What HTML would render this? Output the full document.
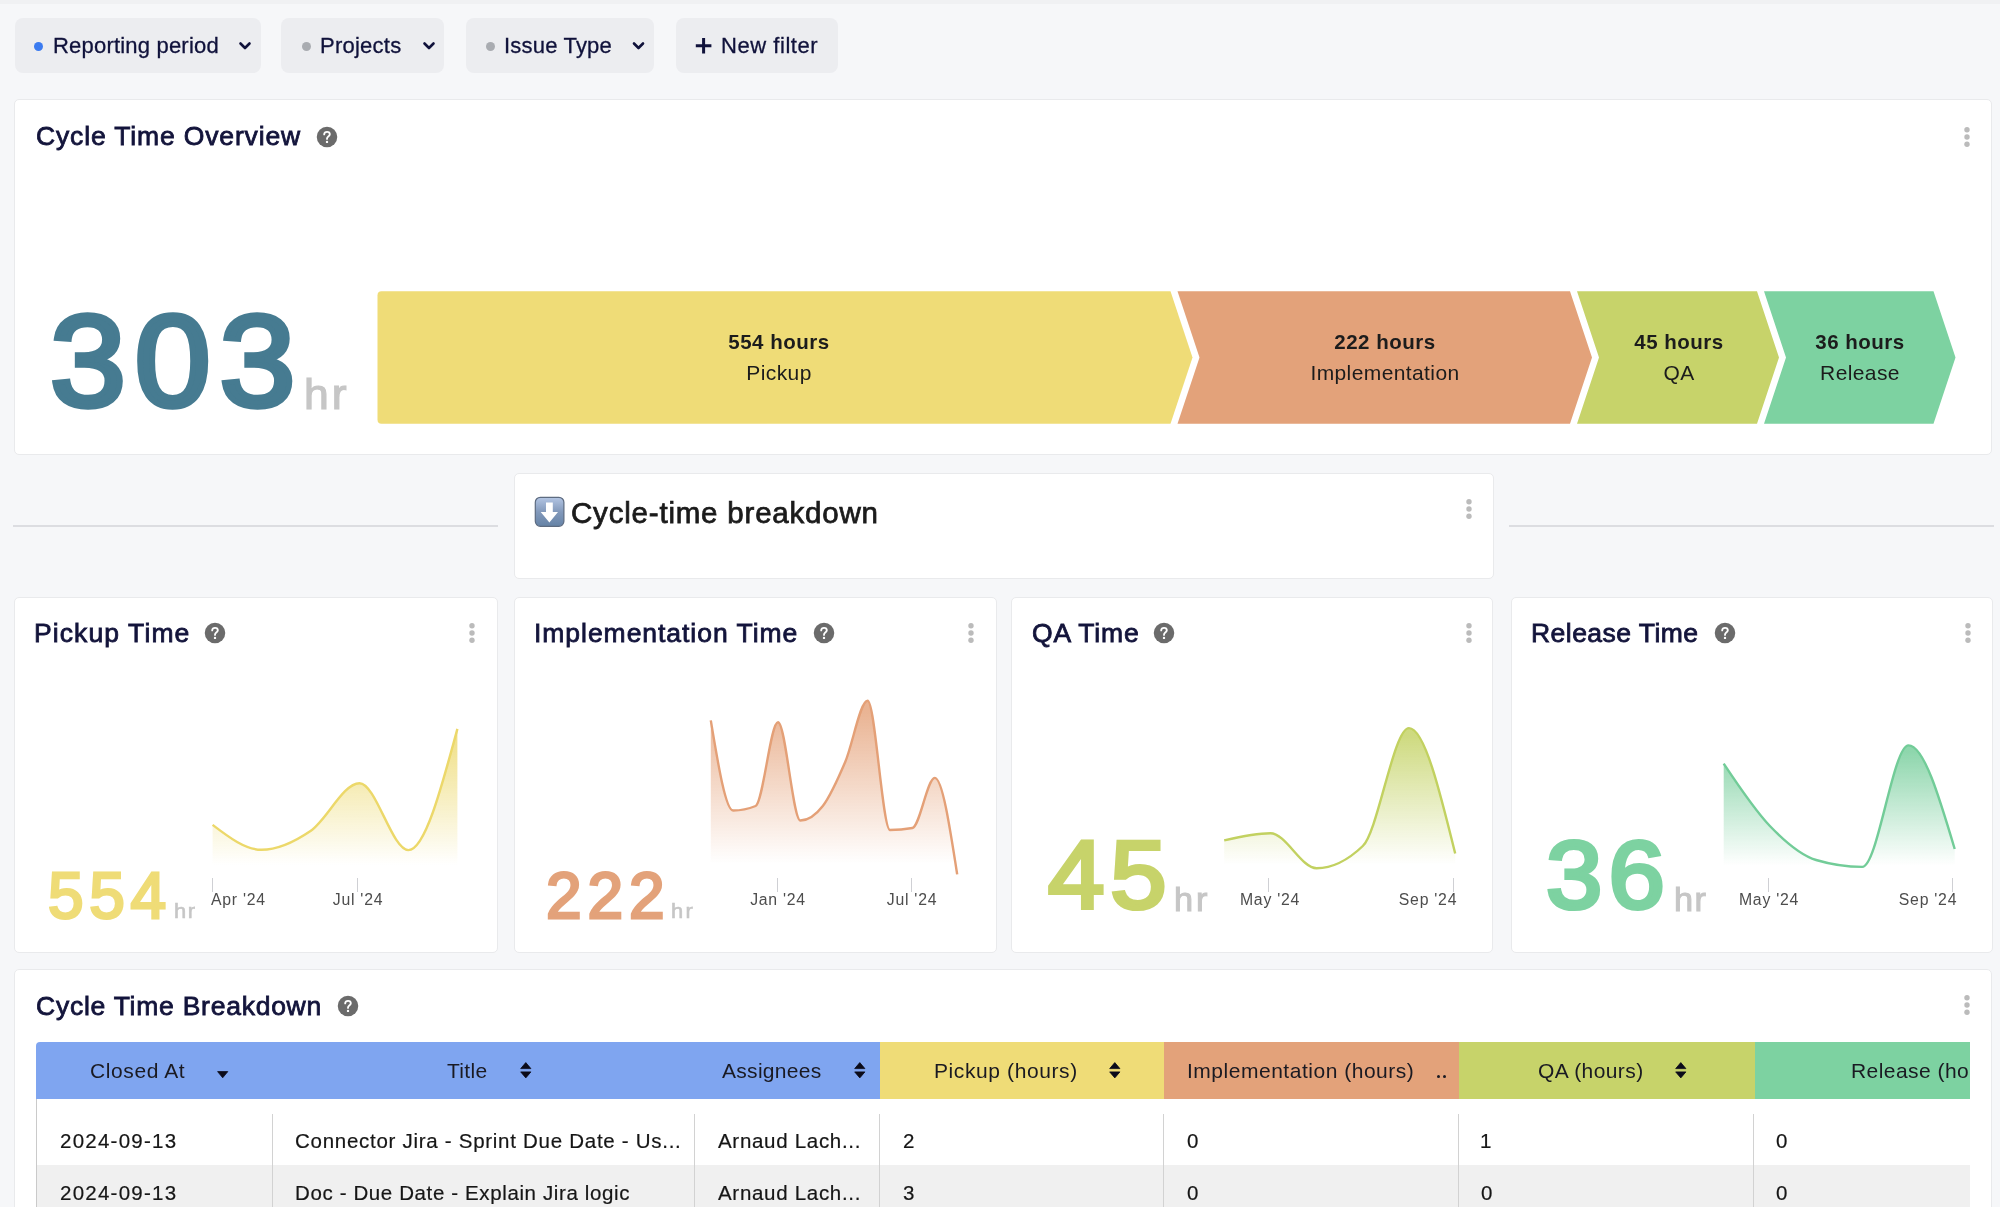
<!DOCTYPE html>
<html><head><meta charset="utf-8">
<style>
*{box-sizing:border-box;margin:0;padding:0}
html,body{width:2000px;height:1207px;overflow:hidden;background:#f6f7f9;font-family:"Liberation Sans",sans-serif}
.a{position:absolute}
.t{position:absolute;line-height:1;white-space:nowrap;will-change:transform}
.btn{position:absolute;background:#ecedf0;border-radius:8px;top:18px;height:55px}
.card{position:absolute;background:#fff;border:1px solid #e9eaec;border-radius:5px}
.med{-webkit-text-stroke:0.45px currentColor}
</style></head><body>
<div class="a" style="left:0;top:0;width:2000px;height:4px;background:#f0f1f3"></div>
<div class="btn" style="left:15px;width:246px"></div>
<div class="btn" style="left:281px;width:163px"></div>
<div class="btn" style="left:466px;width:188px"></div>
<div class="btn" style="left:676px;width:162px"></div>
<div class="a" style="left:34px;top:41.5px;width:9px;height:9px;border-radius:50%;background:#3b7bf0"></div>
<div class="a" style="left:302px;top:41.5px;width:9px;height:9px;border-radius:50%;background:#a9acb1"></div>
<div class="a" style="left:486px;top:41.5px;width:9px;height:9px;border-radius:50%;background:#a9acb1"></div>
<svg class="a" style="left:0;top:0" width="900" height="90">
 <g fill="none" stroke="#10123b" stroke-width="2.6" stroke-linecap="round" stroke-linejoin="round">
  <path d="M240.5 43.5 L245 48 L249.5 43.5"/>
  <path d="M424.5 43.5 L429 48 L433.5 43.5"/>
  <path d="M634 43.5 L638.5 48 L643 43.5"/>
 </g>
 <path d="M703.6 38v15.5M695.8 45.7h15.6" stroke="#10123b" stroke-width="3" fill="none"/>
</svg>
<div class="t" style="left:52.70px;top:34.87px;font-size:22px;color:#10123b;letter-spacing:0.2px;-webkit-text-stroke:0.3px #10123b;">Reporting period</div>
<div class="t" style="left:320.40px;top:34.87px;font-size:22px;color:#10123b;letter-spacing:0.25px;-webkit-text-stroke:0.3px #10123b;">Projects</div>
<div class="t" style="left:503.67px;top:34.87px;font-size:22px;color:#10123b;letter-spacing:0.2px;-webkit-text-stroke:0.3px #10123b;">Issue Type</div>
<div class="t" style="left:720.60px;top:34.87px;font-size:22px;color:#10123b;letter-spacing:0.55px;-webkit-text-stroke:0.3px #10123b;">New filter</div>
<div class="card" style="left:14px;top:99px;width:1977.5px;height:356px"></div>
<div class="t" style="left:35.85px;top:123.37px;font-size:26.5px;color:#13143b;letter-spacing:0.85px;-webkit-text-stroke:0.8px #13143b;">Cycle Time Overview</div>
<svg class="a" style="left:314.50px;top:124.60px" width="24" height="24" viewBox="0 0 24 24"><circle cx="12" cy="12" r="10.25" fill="#6b6b6b"/><path d="M9.2 9.4 C9.2 7.6 10.4 6.9 12 6.9 C13.6 6.9 14.8 7.9 14.8 9.3 C14.8 10.7 13.6 11.3 12.9 11.9 C12.3 12.4 12 12.9 12 13.9" fill="none" stroke="#fff" stroke-width="1.9" stroke-linecap="round"/><circle cx="12" cy="16.9" r="1.2" fill="#fff"/></svg>
<svg class="a" style="left:1963.00px;top:124.60px" width="8" height="24"><circle cx="4" cy="4.8" r="2.7" fill="#bbb"/><circle cx="4" cy="12" r="2.7" fill="#bbb"/><circle cx="4" cy="19.2" r="2.7" fill="#bbb"/></svg>
<div class="t" style="left:49.69px;top:295.94px;font-size:130px;color:#467b91;letter-spacing:8.42px;-webkit-text-stroke:5.5px #467b91;transform:scaleX(1.05);transform-origin:0 0">303</div>
<div class="t" style="left:304.25px;top:373.54px;font-size:42px;color:#c6c6c6;letter-spacing:2.80px;-webkit-text-stroke:1.2px #c6c6c6;transform:scaleX(1.06);transform-origin:0 0">hr</div>
<svg class="a" style="left:0;top:0" width="2000" height="460">
 <path d="M381.5 291.25 H1170.5 L1192.5 357.5 L1170.5 423.75 H381.5 Q377.5 423.75 377.5 419.75 V295.25 Q377.5 291.25 381.5 291.25Z" fill="#efdc77"/>
 <path d="M1177.5 291.25 H1570 L1592 357.5 L1570 423.75 H1177.5 L1199.5 357.5Z" fill="#e3a27a"/>
 <path d="M1577 291.25 H1757 L1779 357.5 L1757 423.75 H1577 L1599 357.5Z" fill="#c7d36a"/>
 <path d="M1764 291.25 H1933.5 L1955.5 357.5 L1933.5 423.75 H1764 L1786 357.5Z" fill="#7dd2a1"/>
</svg>
<div class="t" style="left:479.25px;width:600px;text-align:center;top:331.74px;font-size:20.5px;font-weight:700;color:#1c1c1c;letter-spacing:0.5px;">554 hours</div>
<div class="t" style="left:479.20px;width:600px;text-align:center;top:362.22px;font-size:21px;color:#1c1c1c;letter-spacing:0.4px;">Pickup</div>
<div class="t" style="left:1085.00px;width:600px;text-align:center;top:331.74px;font-size:20.5px;font-weight:700;color:#1c1c1c;letter-spacing:0.5px;">222 hours</div>
<div class="t" style="left:1084.95px;width:600px;text-align:center;top:362.22px;font-size:21px;color:#1c1c1c;letter-spacing:0.4px;">Implementation</div>
<div class="t" style="left:1378.75px;width:600px;text-align:center;top:331.74px;font-size:20.5px;font-weight:700;color:#1c1c1c;letter-spacing:0.5px;">45 hours</div>
<div class="t" style="left:1378.70px;width:600px;text-align:center;top:362.22px;font-size:21px;color:#1c1c1c;letter-spacing:0.4px;">QA</div>
<div class="t" style="left:1560.45px;width:600px;text-align:center;top:331.74px;font-size:20.5px;font-weight:700;color:#1c1c1c;letter-spacing:0.5px;">36 hours</div>
<div class="t" style="left:1560.40px;width:600px;text-align:center;top:362.22px;font-size:21px;color:#1c1c1c;letter-spacing:0.4px;">Release</div>
<div class="a" style="left:13px;top:525px;width:485px;height:2px;background:#dcdde1"></div>
<div class="a" style="left:1509px;top:525px;width:485px;height:2px;background:#dcdde1"></div>
<div class="card" style="left:513.5px;top:472.5px;width:980px;height:106.5px"></div>
<svg class="a" style="left:534px;top:496px" width="32" height="32" viewBox="0 0 32 32">
 <defs><linearGradient id="eg" x1="0" y1="0" x2="0" y2="1"><stop offset="0" stop-color="#b4c6e4"/><stop offset="0.5" stop-color="#8299bb"/><stop offset="1" stop-color="#6583a6"/></linearGradient></defs>
 <rect x="1.3" y="1.3" width="28.6" height="29" rx="5" fill="url(#eg)" stroke="#5d6b80" stroke-width="1.2"/>
 <path d="M12 6.5 H18.8 V16 H24 L15.4 26.4 L6.7 16 H12Z" fill="#fff"/>
</svg>
<div class="t" style="left:570.80px;top:497.83px;font-size:29.5px;color:#1b1b1b;letter-spacing:0.8px;-webkit-text-stroke:0.75px #1b1b1b;">Cycle-time breakdown</div>
<svg class="a" style="left:1465.00px;top:496.80px" width="8" height="24"><circle cx="4" cy="4.8" r="2.7" fill="#bbb"/><circle cx="4" cy="12" r="2.7" fill="#bbb"/><circle cx="4" cy="19.2" r="2.7" fill="#bbb"/></svg>
<div class="card" style="left:14px;top:596.5px;width:483.5px;height:356px"></div>
<div class="card" style="left:513.5px;top:596.5px;width:483px;height:356px"></div>
<div class="card" style="left:1011px;top:596.5px;width:482px;height:356px"></div>
<div class="card" style="left:1510.5px;top:596.5px;width:482.5px;height:356px"></div>
<div class="t" style="left:34.43px;top:620.27px;font-size:26.5px;color:#13143b;letter-spacing:1.1px;-webkit-text-stroke:0.8px #13143b;">Pickup Time</div>
<svg class="a" style="left:203.40px;top:620.90px" width="24" height="24" viewBox="0 0 24 24"><circle cx="12" cy="12" r="10.25" fill="#6b6b6b"/><path d="M9.2 9.4 C9.2 7.6 10.4 6.9 12 6.9 C13.6 6.9 14.8 7.9 14.8 9.3 C14.8 10.7 13.6 11.3 12.9 11.9 C12.3 12.4 12 12.9 12 13.9" fill="none" stroke="#fff" stroke-width="1.9" stroke-linecap="round"/><circle cx="12" cy="16.9" r="1.2" fill="#fff"/></svg>
<svg class="a" style="left:468.00px;top:620.60px" width="8" height="24"><circle cx="4" cy="4.8" r="2.7" fill="#bbb"/><circle cx="4" cy="12" r="2.7" fill="#bbb"/><circle cx="4" cy="19.2" r="2.7" fill="#bbb"/></svg>
<div class="t" style="left:533.65px;top:620.27px;font-size:26.5px;color:#13143b;letter-spacing:0.96px;-webkit-text-stroke:0.8px #13143b;">Implementation Time</div>
<svg class="a" style="left:811.80px;top:620.90px" width="24" height="24" viewBox="0 0 24 24"><circle cx="12" cy="12" r="10.25" fill="#6b6b6b"/><path d="M9.2 9.4 C9.2 7.6 10.4 6.9 12 6.9 C13.6 6.9 14.8 7.9 14.8 9.3 C14.8 10.7 13.6 11.3 12.9 11.9 C12.3 12.4 12 12.9 12 13.9" fill="none" stroke="#fff" stroke-width="1.9" stroke-linecap="round"/><circle cx="12" cy="16.9" r="1.2" fill="#fff"/></svg>
<svg class="a" style="left:967.00px;top:620.60px" width="8" height="24"><circle cx="4" cy="4.8" r="2.7" fill="#bbb"/><circle cx="4" cy="12" r="2.7" fill="#bbb"/><circle cx="4" cy="19.2" r="2.7" fill="#bbb"/></svg>
<div class="t" style="left:1032.34px;top:620.27px;font-size:26.5px;color:#13143b;letter-spacing:0.85px;-webkit-text-stroke:0.8px #13143b;">QA Time</div>
<svg class="a" style="left:1152.40px;top:620.90px" width="24" height="24" viewBox="0 0 24 24"><circle cx="12" cy="12" r="10.25" fill="#6b6b6b"/><path d="M9.2 9.4 C9.2 7.6 10.4 6.9 12 6.9 C13.6 6.9 14.8 7.9 14.8 9.3 C14.8 10.7 13.6 11.3 12.9 11.9 C12.3 12.4 12 12.9 12 13.9" fill="none" stroke="#fff" stroke-width="1.9" stroke-linecap="round"/><circle cx="12" cy="16.9" r="1.2" fill="#fff"/></svg>
<svg class="a" style="left:1465.40px;top:620.60px" width="8" height="24"><circle cx="4" cy="4.8" r="2.7" fill="#bbb"/><circle cx="4" cy="12" r="2.7" fill="#bbb"/><circle cx="4" cy="19.2" r="2.7" fill="#bbb"/></svg>
<div class="t" style="left:1531.33px;top:620.27px;font-size:26.5px;color:#13143b;letter-spacing:0.46px;-webkit-text-stroke:0.8px #13143b;">Release Time</div>
<svg class="a" style="left:1713.30px;top:620.90px" width="24" height="24" viewBox="0 0 24 24"><circle cx="12" cy="12" r="10.25" fill="#6b6b6b"/><path d="M9.2 9.4 C9.2 7.6 10.4 6.9 12 6.9 C13.6 6.9 14.8 7.9 14.8 9.3 C14.8 10.7 13.6 11.3 12.9 11.9 C12.3 12.4 12 12.9 12 13.9" fill="none" stroke="#fff" stroke-width="1.9" stroke-linecap="round"/><circle cx="12" cy="16.9" r="1.2" fill="#fff"/></svg>
<svg class="a" style="left:1964.00px;top:620.60px" width="8" height="24"><circle cx="4" cy="4.8" r="2.7" fill="#bbb"/><circle cx="4" cy="12" r="2.7" fill="#bbb"/><circle cx="4" cy="19.2" r="2.7" fill="#bbb"/></svg>
<svg class="a" style="left:0;top:0" width="2000" height="1207"><defs><linearGradient id="g1" gradientUnits="userSpaceOnUse" x1="0" y1="728.9" x2="0" y2="872"><stop offset="0.05" stop-color="#ecd86a" stop-opacity="0.8"/><stop offset="0.95" stop-color="#ecd86a" stop-opacity="0"/></linearGradient></defs><path d="M212.60 824.90 C228.93 837.35 245.27 849.80 261.60 849.80 C277.90 849.80 294.20 842.08 310.50 831.00 C326.83 819.90 343.17 783.20 359.50 783.20 C375.80 783.20 392.10 850.10 408.40 850.10 C424.73 850.10 441.07 789.50 457.40 728.90 L457.40 878 L212.60 878 Z" fill="url(#g1)"/><path d="M212.60 824.90 C228.93 837.35 245.27 849.80 261.60 849.80 C277.90 849.80 294.20 842.08 310.50 831.00 C326.83 819.90 343.17 783.20 359.50 783.20 C375.80 783.20 392.10 850.10 408.40 850.10 C424.73 850.10 441.07 789.50 457.40 728.90" fill="none" stroke="#ecd86a" stroke-width="2.4" stroke-linejoin="round"/></svg>
<svg class="a" style="left:0;top:0" width="2000" height="1207"><defs><linearGradient id="g2" gradientUnits="userSpaceOnUse" x1="0" y1="700.8" x2="0" y2="872"><stop offset="0.05" stop-color="#e4a077" stop-opacity="0.8"/><stop offset="0.95" stop-color="#e4a077" stop-opacity="0"/></linearGradient></defs><path d="M710.80 720.40 C718.27 765.45 725.73 810.50 733.20 810.50 C740.67 810.50 748.13 809.00 755.60 806.00 C763.07 803.00 770.53 722.20 778.00 722.20 C785.47 722.20 792.93 820.50 800.40 820.50 C807.87 820.50 815.33 815.67 822.80 806.00 C830.27 796.33 837.73 779.53 845.20 762.00 C852.67 744.47 860.13 700.80 867.60 700.80 C875.07 700.80 882.53 830.00 890.00 830.00 C897.47 830.00 904.93 829.33 912.40 828.00 C919.87 826.67 927.33 777.90 934.80 777.90 C942.27 777.90 949.73 826.15 957.20 874.40 L957.20 878 L710.80 878 Z" fill="url(#g2)"/><path d="M710.80 720.40 C718.27 765.45 725.73 810.50 733.20 810.50 C740.67 810.50 748.13 809.00 755.60 806.00 C763.07 803.00 770.53 722.20 778.00 722.20 C785.47 722.20 792.93 820.50 800.40 820.50 C807.87 820.50 815.33 815.67 822.80 806.00 C830.27 796.33 837.73 779.53 845.20 762.00 C852.67 744.47 860.13 700.80 867.60 700.80 C875.07 700.80 882.53 830.00 890.00 830.00 C897.47 830.00 904.93 829.33 912.40 828.00 C919.87 826.67 927.33 777.90 934.80 777.90 C942.27 777.90 949.73 826.15 957.20 874.40" fill="none" stroke="#e4a077" stroke-width="2.4" stroke-linejoin="round"/></svg>
<svg class="a" style="left:0;top:0" width="2000" height="1207"><defs><linearGradient id="g3" gradientUnits="userSpaceOnUse" x1="0" y1="728.1" x2="0" y2="872"><stop offset="0.05" stop-color="#c2d160" stop-opacity="0.8"/><stop offset="0.95" stop-color="#c2d160" stop-opacity="0"/></linearGradient></defs><path d="M1224.20 840.30 C1239.60 836.75 1255.00 833.20 1270.40 833.20 C1285.80 833.20 1301.20 868.20 1316.60 868.20 C1332.00 868.20 1347.40 860.80 1362.80 846.00 C1378.20 831.20 1393.60 728.10 1409.00 728.10 C1424.40 728.10 1439.80 790.80 1455.20 853.50 L1455.20 878 L1224.20 878 Z" fill="url(#g3)"/><path d="M1224.20 840.30 C1239.60 836.75 1255.00 833.20 1270.40 833.20 C1285.80 833.20 1301.20 868.20 1316.60 868.20 C1332.00 868.20 1347.40 860.80 1362.80 846.00 C1378.20 831.20 1393.60 728.10 1409.00 728.10 C1424.40 728.10 1439.80 790.80 1455.20 853.50" fill="none" stroke="#c2d160" stroke-width="2.4" stroke-linejoin="round"/></svg>
<svg class="a" style="left:0;top:0" width="2000" height="1207"><defs><linearGradient id="g4" gradientUnits="userSpaceOnUse" x1="0" y1="745.4" x2="0" y2="872"><stop offset="0.05" stop-color="#72cc98" stop-opacity="0.8"/><stop offset="0.95" stop-color="#72cc98" stop-opacity="0"/></linearGradient></defs><path d="M1723.70 763.60 C1739.10 786.77 1754.50 809.93 1769.90 826.00 C1785.30 842.07 1800.70 855.40 1816.10 860.00 C1831.50 864.60 1846.90 866.90 1862.30 866.90 C1877.70 866.90 1893.10 745.40 1908.50 745.40 C1923.90 745.40 1939.30 797.20 1954.70 849.00 L1954.70 878 L1723.70 878 Z" fill="url(#g4)"/><path d="M1723.70 763.60 C1739.10 786.77 1754.50 809.93 1769.90 826.00 C1785.30 842.07 1800.70 855.40 1816.10 860.00 C1831.50 864.60 1846.90 866.90 1862.30 866.90 C1877.70 866.90 1893.10 745.40 1908.50 745.40 C1923.90 745.40 1939.30 797.20 1954.70 849.00" fill="none" stroke="#72cc98" stroke-width="2.4" stroke-linejoin="round"/></svg>
<div class="a" style="left:212.30px;top:878px;width:1px;height:14px;background:#cfd0d4"></div>
<div class="a" style="left:356.50px;top:878px;width:1px;height:14px;background:#cfd0d4"></div>
<div class="a" style="left:776.50px;top:878px;width:1px;height:14px;background:#cfd0d4"></div>
<div class="a" style="left:910.80px;top:878px;width:1px;height:14px;background:#cfd0d4"></div>
<div class="a" style="left:1268.10px;top:878px;width:1px;height:14px;background:#cfd0d4"></div>
<div class="a" style="left:1452.90px;top:878px;width:1px;height:14px;background:#cfd0d4"></div>
<div class="a" style="left:1767.70px;top:878px;width:1px;height:14px;background:#cfd0d4"></div>
<div class="a" style="left:1952.30px;top:878px;width:1px;height:14px;background:#cfd0d4"></div>
<div class="t" style="left:211.37px;top:892.02px;font-size:15.8px;color:#4d4d4d;letter-spacing:0.75px;">Apr '24</div>
<div class="t" style="left:58.38px;width:600px;text-align:center;top:892.02px;font-size:15.8px;color:#4d4d4d;letter-spacing:0.75px;">Jul '24</div>
<div class="t" style="left:478.38px;width:600px;text-align:center;top:892.02px;font-size:15.8px;color:#4d4d4d;letter-spacing:0.75px;">Jan '24</div>
<div class="t" style="left:611.67px;width:600px;text-align:center;top:892.02px;font-size:15.8px;color:#4d4d4d;letter-spacing:0.75px;">Jul '24</div>
<div class="t" style="left:970.17px;width:600px;text-align:center;top:892.02px;font-size:15.8px;color:#4d4d4d;letter-spacing:0.75px;">May '24</div>
<div class="t" style="left:1127.88px;width:600px;text-align:center;top:892.02px;font-size:15.8px;color:#4d4d4d;letter-spacing:0.75px;">Sep '24</div>
<div class="t" style="left:1469.08px;width:600px;text-align:center;top:892.02px;font-size:15.8px;color:#4d4d4d;letter-spacing:0.75px;">May '24</div>
<div class="t" style="left:1627.58px;width:600px;text-align:center;top:892.02px;font-size:15.8px;color:#4d4d4d;letter-spacing:0.75px;">Sep '24</div>
<div class="t" style="left:47.84px;top:863.62px;font-size:64px;color:#efdc77;letter-spacing:5.63px;-webkit-text-stroke:2.8px #efdc77;transform:scaleX(1.0);transform-origin:0 0">554</div>
<div class="t" style="left:173.80px;top:900.98px;font-size:20.7px;color:#c6c6c6;letter-spacing:1.45px;-webkit-text-stroke:0.6px #c6c6c6;transform:scaleX(1.06);transform-origin:0 0">hr</div>
<div class="t" style="left:546.18px;top:863.62px;font-size:64px;color:#e3a27a;letter-spacing:5.93px;-webkit-text-stroke:2.8px #e3a27a;transform:scaleX(1.0);transform-origin:0 0">222</div>
<div class="t" style="left:670.80px;top:900.98px;font-size:20.7px;color:#c6c6c6;letter-spacing:2.21px;-webkit-text-stroke:0.6px #c6c6c6;transform:scaleX(1.06);transform-origin:0 0">hr</div>
<div class="t" style="left:1047.88px;top:827.20px;font-size:96.5px;color:#c7d36a;letter-spacing:5.59px;-webkit-text-stroke:4.2px #c7d36a;transform:scaleX(1.05);transform-origin:0 0">45</div>
<div class="t" style="left:1173.95px;top:883.97px;font-size:32.4px;color:#c6c6c6;letter-spacing:2.69px;-webkit-text-stroke:1px #c6c6c6;transform:scaleX(1.06);transform-origin:0 0">hr</div>
<div class="t" style="left:1545.85px;top:827.20px;font-size:96.5px;color:#7dd2a1;letter-spacing:5.90px;-webkit-text-stroke:4.2px #7dd2a1;transform:scaleX(1.05);transform-origin:0 0">36</div>
<div class="t" style="left:1673.55px;top:883.97px;font-size:32.4px;color:#c6c6c6;letter-spacing:1.28px;-webkit-text-stroke:1px #c6c6c6;transform:scaleX(1.06);transform-origin:0 0">hr</div>
<div class="card" style="left:14px;top:968.5px;width:1977.5px;height:300px"></div>
<div class="t" style="left:35.85px;top:992.87px;font-size:26.5px;color:#13143b;letter-spacing:0.75px;-webkit-text-stroke:0.8px #13143b;">Cycle Time Breakdown</div>
<svg class="a" style="left:335.60px;top:993.50px" width="24" height="24" viewBox="0 0 24 24"><circle cx="12" cy="12" r="10.25" fill="#6b6b6b"/><path d="M9.2 9.4 C9.2 7.6 10.4 6.9 12 6.9 C13.6 6.9 14.8 7.9 14.8 9.3 C14.8 10.7 13.6 11.3 12.9 11.9 C12.3 12.4 12 12.9 12 13.9" fill="none" stroke="#fff" stroke-width="1.9" stroke-linecap="round"/><circle cx="12" cy="16.9" r="1.2" fill="#fff"/></svg>
<svg class="a" style="left:1962.80px;top:993.30px" width="8" height="24"><circle cx="4" cy="4.8" r="2.7" fill="#bbb"/><circle cx="4" cy="12" r="2.7" fill="#bbb"/><circle cx="4" cy="19.2" r="2.7" fill="#bbb"/></svg>
<div class="a" style="left:36px;top:1042px;width:844px;height:56.5px;background:#7fa5f0;border-top-left-radius:4px"></div>
<div class="a" style="left:880px;top:1042px;width:284px;height:56.5px;background:#efdc77"></div>
<div class="a" style="left:1164px;top:1042px;width:295.3px;height:56.5px;background:#e3a27a"></div>
<div class="a" style="left:1459.3px;top:1042px;width:295.7px;height:56.5px;background:#c7d36a"></div>
<div class="a" style="left:1755px;top:1042px;width:215.3px;height:56.5px;background:#7dd2a1;overflow:hidden"></div>
<div class="a" style="left:36px;top:1165.3px;width:1934.3px;height:60px;background:#f0f0f0"></div>
<div class="a" style="left:35.6px;top:1098.5px;width:1.2px;height:120px;background:#cacaca"></div>
<div class="a" style="left:271.70px;top:1114px;width:1.4px;height:100px;background:#d2d2d2"></div>
<div class="a" style="left:693.80px;top:1114px;width:1.4px;height:100px;background:#d2d2d2"></div>
<div class="a" style="left:878.60px;top:1114px;width:1.4px;height:100px;background:#d2d2d2"></div>
<div class="a" style="left:1162.80px;top:1114px;width:1.4px;height:100px;background:#d2d2d2"></div>
<div class="a" style="left:1457.50px;top:1114px;width:1.4px;height:100px;background:#d2d2d2"></div>
<div class="a" style="left:1752.60px;top:1114px;width:1.4px;height:100px;background:#d2d2d2"></div>
<div class="t" style="left:90.23px;top:1059.62px;font-size:21px;color:#1a1a22;letter-spacing:0.6px;">Closed At</div>
<div class="t" style="left:446.83px;top:1059.62px;font-size:21px;color:#1a1a22;letter-spacing:0.3px;">Title</div>
<div class="t" style="left:721.76px;top:1059.62px;font-size:21px;color:#1a1a22;letter-spacing:0.3px;">Assignees</div>
<div class="t" style="left:933.58px;top:1059.62px;font-size:21px;color:#1a1a22;letter-spacing:0.6px;">Pickup (hours)</div>
<div class="t" style="left:1186.76px;top:1059.62px;font-size:21px;color:#1a1a22;letter-spacing:0.52px;">Implementation (hours)</div>
<div class="a" style="left:1437.3px;top:1074.6px;width:3px;height:3px;border-radius:50%;background:#1a1a22"></div><div class="a" style="left:1443.3px;top:1074.6px;width:3px;height:3px;border-radius:50%;background:#1a1a22"></div>
<div class="t" style="left:1538.01px;top:1059.62px;font-size:21px;color:#1a1a22;letter-spacing:0.4px;">QA (hours)</div>
<div class="a" style="left:1755px;top:1042px;width:215.3px;height:56.5px;overflow:hidden"><div class="t" style="left:96.28px;top:17.62px;font-size:21px;color:#1a1a22;letter-spacing:0.45px;">Release (hours)</div>
</div>
<svg class="a" style="left:215.6px;top:1070px" width="14" height="10"><path d="M1.6 1.6 H11.8 L6.7 7.8Z" fill="#0b0b1a" stroke="#0b0b1a" stroke-width="0.8" stroke-linejoin="round"/></svg>
<svg class="a" style="left:518.90px;top:1061px" width="14" height="19"><g fill="#0b0b1a" stroke="#0b0b1a" stroke-width="0.8" stroke-linejoin="round"><path d="M6.8 1.6 L11.9 7.6 H1.7Z"/><path d="M1.7 10.9 H11.9 L6.8 16.9Z"/></g></svg>
<svg class="a" style="left:852.70px;top:1061px" width="14" height="19"><g fill="#0b0b1a" stroke="#0b0b1a" stroke-width="0.8" stroke-linejoin="round"><path d="M6.8 1.6 L11.9 7.6 H1.7Z"/><path d="M1.7 10.9 H11.9 L6.8 16.9Z"/></g></svg>
<svg class="a" style="left:1108.20px;top:1061px" width="14" height="19"><g fill="#0b0b1a" stroke="#0b0b1a" stroke-width="0.8" stroke-linejoin="round"><path d="M6.8 1.6 L11.9 7.6 H1.7Z"/><path d="M1.7 10.9 H11.9 L6.8 16.9Z"/></g></svg>
<svg class="a" style="left:1674.20px;top:1061px" width="14" height="19"><g fill="#0b0b1a" stroke="#0b0b1a" stroke-width="0.8" stroke-linejoin="round"><path d="M6.8 1.6 L11.9 7.6 H1.7Z"/><path d="M1.7 10.9 H11.9 L6.8 16.9Z"/></g></svg>
<div class="t" style="left:59.57px;top:1130.84px;font-size:20.5px;color:#161616;letter-spacing:1.25px;-webkit-text-stroke:0.2px #161616;">2024-09-13</div>
<div class="t" style="left:295.26px;top:1130.84px;font-size:20.5px;color:#161616;letter-spacing:0.72px;-webkit-text-stroke:0.2px #161616;">Connector Jira - Sprint Due Date - Us...</div>
<div class="t" style="left:717.56px;top:1130.84px;font-size:20.5px;color:#161616;letter-spacing:0.7px;-webkit-text-stroke:0.2px #161616;">Arnaud Lach...</div>
<div class="t" style="left:902.77px;top:1130.84px;font-size:20.5px;color:#161616;letter-spacing:0px;-webkit-text-stroke:0.2px #161616;">2</div>
<div class="t" style="left:1186.50px;top:1130.84px;font-size:20.5px;color:#161616;letter-spacing:0px;-webkit-text-stroke:0.2px #161616;">0</div>
<div class="t" style="left:1479.74px;top:1130.84px;font-size:20.5px;color:#161616;letter-spacing:0px;-webkit-text-stroke:0.2px #161616;">1</div>
<div class="t" style="left:1775.90px;top:1130.84px;font-size:20.5px;color:#161616;letter-spacing:0px;-webkit-text-stroke:0.2px #161616;">0</div>
<div class="t" style="left:59.57px;top:1182.64px;font-size:20.5px;color:#161616;letter-spacing:1.25px;-webkit-text-stroke:0.2px #161616;">2024-09-13</div>
<div class="t" style="left:294.62px;top:1182.64px;font-size:20.5px;color:#161616;letter-spacing:0.62px;-webkit-text-stroke:0.2px #161616;">Doc - Due Date - Explain Jira logic</div>
<div class="t" style="left:717.56px;top:1182.64px;font-size:20.5px;color:#161616;letter-spacing:0.7px;-webkit-text-stroke:0.2px #161616;">Arnaud Lach...</div>
<div class="t" style="left:903.02px;top:1182.64px;font-size:20.5px;color:#161616;letter-spacing:0px;-webkit-text-stroke:0.2px #161616;">3</div>
<div class="t" style="left:1186.50px;top:1182.64px;font-size:20.5px;color:#161616;letter-spacing:0px;-webkit-text-stroke:0.2px #161616;">0</div>
<div class="t" style="left:1480.50px;top:1182.64px;font-size:20.5px;color:#161616;letter-spacing:0px;-webkit-text-stroke:0.2px #161616;">0</div>
<div class="t" style="left:1775.90px;top:1182.64px;font-size:20.5px;color:#161616;letter-spacing:0px;-webkit-text-stroke:0.2px #161616;">0</div>
</body></html>
